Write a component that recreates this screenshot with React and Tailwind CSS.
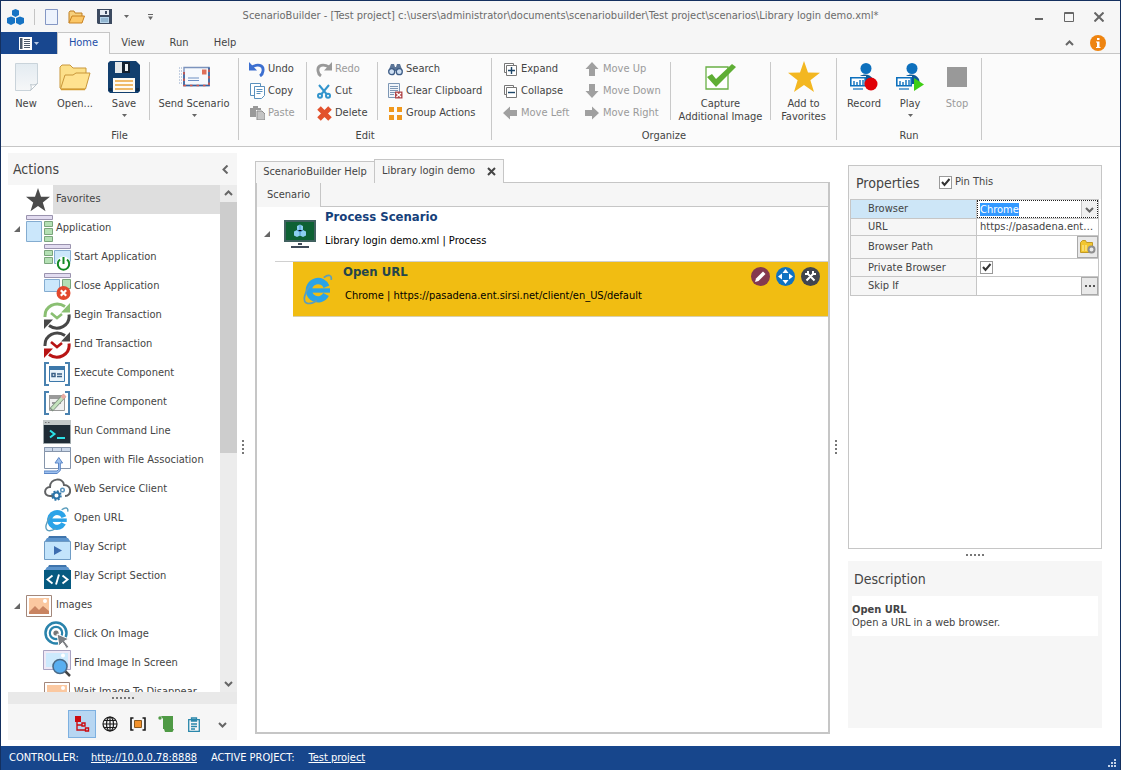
import React, { useState } from "react";

/* ---------- shared icons ---------- */

const Caret = ({ className = "" }) => (
  <svg className={className} width="5" height="3" viewBox="0 0 5 3" fill="#666">
    <path d="M0 0h5L2.500 3z" />
  </svg>
);

const Chevron = ({ d = "M1 6l3.500-3.500L8 6" }) => (
  <svg width="9" height="9" viewBox="0 0 9 9" fill="none" stroke="#666" strokeWidth="2">
    <path d={d} />
  </svg>
);

const DOWN = "M1 3l3.500 3.500L8 3";
const LEFT = "M6.500 0.500L2.500 4.500l4 4";

const IeIcon = ({ size }) => (
  <svg width={size} height={size} viewBox="0 0 28 28" fill="none">
    <circle cx="14" cy="15" r="8" stroke="#2ba3e8" strokeWidth="5.500" strokeDasharray="43 8" transform="rotate(28 14 15)" />
    <path d="M8 15.300h16.500" stroke="#2ba3e8" strokeWidth="3.800" />
    <path d="M19 4c4-3 7.500-2.500 6.500 2M7 11C1.500 18 1 24.500 3.500 26S10 26 13 24" stroke="#5d9ebd" strokeWidth="1.500" />
  </svg>
);

const Star = ({ size, color }) => (
  <svg width={size} height={size} viewBox="0 0 32 32" fill={color}>
    <path d="M16 0l4 11.500 12 .2-9.600 7.500L26 31l-10-7-10 7 3.600-11.800L0 11.700l12-.2z" />
  </svg>
);

/* ---------- quick access + ribbon icons ---------- */

const LogoIcon = () => (
  <svg width="17" height="16" viewBox="0 0 17 16" fill="#1673c4">
    <path d="M8.500 0l3.500 1.500v4.500l-3.500 2-3.500-2V1.500zM4 7.500l4 1.500v5l-4 2-4-2V9zM13 7.500L17 9v5l-4 2-4-2V9z" />
  </svg>
);

const PageIcon = () => (
  <svg width="13" height="16" viewBox="0 0 13 16">
    <path d="M.5.5h12v15H.5z" fill="#edf3fd" stroke="#8497c4" />
  </svg>
);

const SmallFolder = () => (
  <svg width="17" height="14" viewBox="0 0 17 14">
    <path d="M1 13V2.500L2 1h4l1 2h7v3" fill="#f7cf7b" stroke="#bf7f22" />
    <path d="M1 13L4 6h12.500L14 13z" fill="#fbc767" stroke="#c98222" />
  </svg>
);

const SmallFloppy = () => (
  <svg width="15" height="15" viewBox="0 0 15 15">
    <path d="M0 0h15v15H1l-1-1z" fill="#3c4a60" />
    <path d="M3 1h9v5H3z" fill="#e8edf3" />
    <path d="M8 2h2v3H8z" fill="#3c4a60" />
    <path d="M3 8h9v6H3z" fill="#b7d4ea" />
    <path d="M4 10h7M4 12h7" stroke="#6f98b8" />
  </svg>
);

const NewIcon = () => (
  <svg width="23" height="30" viewBox="0 0 23 30">
    <defs>
      <linearGradient id="page" x1="0" y1="0" x2="0" y2="1">
        <stop offset="0" stopColor="#e3ebf1" />
        <stop offset="1" stopColor="#f6f7f8" />
      </linearGradient>
    </defs>
    <path d="M.5 1.500h22v20l-7 7H.5z" fill="url(#page)" stroke="#c9d3da" />
    <path d="M15.500 28.500c1-2 1-4 0-6 2 .8 5 .5 7-1z" fill="#fff" stroke="#bcc6cd" />
  </svg>
);

const OpenIcon = () => (
  <svg width="32" height="27" viewBox="0 0 32 27">
    <path d="M1 24V3l2-2h8l3 3h13v5" fill="#fce08a" stroke="#c9973a" />
    <path d="M1.500 25L6 11h8l3-2h14l-4.500 16z" fill="#ffe28f" stroke="#c9973a" />
    <path d="M2 25.500h24" stroke="#d59c30" strokeWidth="1.500" />
  </svg>
);

const SaveIcon = () => (
  <svg width="32" height="32" viewBox="0 0 32 32">
    <path d="M2 0h26l4 4v26l-2 2H2l-2-2V2z" fill="#123f6e" />
    <path d="M7 1h15v11H7z" fill="#e4e8ea" />
    <path d="M14 1h8v11h-8z" fill="#14202e" />
    <path d="M17 3h3v7h-3z" fill="#eef1f3" />
    <path d="M5 17h22v14H5z" fill="#fdfaf3" />
    <path d="M7 20h18M7 24h18M7 28h18" stroke="#eaa53c" strokeWidth="1.600" />
    <path d="M1 27h3v3H1zM28 27h3v3h-3z" fill="#0b2a4b" />
  </svg>
);

const SendIcon = () => (
  <svg width="31" height="22" viewBox="0 0 31 22" fill="none">
    <path d="M0 2h4M0 5h4M0 8h4M0 11h4M0 14h4M0 17h4" stroke="#8aa3c8" strokeDasharray="1 1" />
    <path d="M5 1.500h25v18H5z" fill="#f6f9fd" stroke="#7c93bd" strokeWidth="1.400" />
    <path d="M5 6v13.500h25V1.500" stroke="#35629f" strokeWidth="1.600" />
    <path d="M5 6v13.500h25V1.500" stroke="#d8574a" strokeWidth="1.600" strokeDasharray="2.500 4" />
    <path d="M23 3.500h4.500v5H23z" fill="#e0705a" />
    <path d="M9 12h11M9 14.500h11" stroke="#6c8fc4" strokeWidth="1.200" />
  </svg>
);

const FileMenuIcon = () => (
  <svg width="13" height="13" viewBox="0 0 13 13">
    <path d="M0 0h13v13H0z" fill="#fff" />
    <path d="M1 1h2.500v11H1z" fill="#4d5a6b" />
    <path d="M5 2.500h6M5 4.500h6M5 6.500h6M5 8.500h6M5 10.500h6" stroke="#4d5a6b" />
  </svg>
);

const Undo = ({ color, flip }) => (
  <svg width="16" height="15" viewBox="0 0 16 15" fill="none">
    <g transform={flip ? "translate(16 0) scale(-1 1)" : ""}>
      <path d="M3 5c5-3 12-2.500 11 4-.2 2-1.500 4-3 5" stroke={color} strokeWidth="2.800" />
      <path d="M0 0v8.500h8z" fill={color} />
    </g>
  </svg>
);

const CopyIcon = () => (
  <svg width="15" height="16" viewBox="0 0 15 16" fill="#fff" stroke="#5a90bd">
    <path d="M.5.5h10v12H.5z" />
    <path d="M4.500 3.500h10v9l-3 3h-7z" />
    <path d="M6.500 6.500h6M6.500 8.500h6M6.500 10.500h4" />
  </svg>
);

const PasteIcon = () => (
  <svg width="15" height="14" viewBox="0 0 15 14" fill="#999">
    <path d="M0 2h3V0h5v2h3v2H6v7H0z" />
    <path d="M7 5h5l3 3v6H7z" fill="#c4c4c4" stroke="#8d8d8d" />
  </svg>
);

const CutIcon = () => (
  <svg width="14" height="15" viewBox="0 0 14 15" fill="none" stroke="#3194cc" strokeWidth="2">
    <path d="M2 1l7.500 9M12 1L4.500 10" />
    <circle cx="3" cy="11.800" r="2" />
    <circle cx="11" cy="11.800" r="2" />
  </svg>
);

const DeleteIcon = () => (
  <svg width="15" height="15" viewBox="0 0 15 15" stroke="#e2522d" strokeWidth="5">
    <path d="M2 2l11 11M13 2L2 13" />
  </svg>
);

const SearchIcon = () => (
  <svg width="15" height="13" viewBox="0 0 15 13">
    <path d="M3 1h3l1 3h1l1-3h3l2.500 7H.5z" fill="#5b7597" />
    <circle cx="3.700" cy="8.700" r="3" fill="#cfe0f3" stroke="#3f5d86" strokeWidth="1.300" />
    <circle cx="11.300" cy="8.700" r="3" fill="#cfe0f3" stroke="#3f5d86" strokeWidth="1.300" />
  </svg>
);

const ClearIcon = () => (
  <svg width="15" height="16" viewBox="0 0 15 16">
    <path d="M.5.500h11v14H.5z" fill="#f1f5fa" stroke="#7d97b5" />
    <path d="M2 3.500h8M2 5.500h8M2 7.500h8M2 9.500h6M2 11.500h4" stroke="#7d97b5" />
    <path d="M7 8.500h7.500v7H7z" fill="#b0474a" />
    <path d="M8.500 10l4.500 4m0-4l-4.500 4" stroke="#fff" strokeWidth="1.300" />
  </svg>
);

const GroupIcon = () => (
  <svg width="13" height="13" viewBox="0 0 13 13" fill="#f0981c">
    <path d="M0 0h5v5H0zM8 0h5v5H8zM0 8h5v5H0zM8 8h5v5H8z" />
  </svg>
);

const BoxIcon = ({ plus }) => (
  <svg width="13" height="13" viewBox="0 0 13 13" fill="#fff" stroke="#777">
    <path d="M.5 .5h9v9h-9z" />
    <path d="M2.500 2.500h10v10h-10z" />
    <path d={plus ? "M4 7.500h7M7.500 4v7" : "M4 7.500h7"} stroke="#1d4668" strokeWidth="1.400" />
  </svg>
);

const Arrow = ({ turn }) => (
  <svg width="14" height="14" viewBox="0 0 14 14" fill="#a0a0a0">
    <path d="M7 0l6.500 7H10v7H4V7H.5z" transform={`rotate(${turn} 7 7)`} />
  </svg>
);

const CaptureIcon = () => (
  <svg width="32" height="28" viewBox="0 0 32 28">
    <path d="M1 4h22v22H1z" fill="#fff" stroke="#69b045" strokeWidth="1.300" />
    <path d="M2 14l5-3 4 5L27 1l4 3-20 20z" fill="#5fae35" />
  </svg>
);

const PersonIcon = ({ badge }) => (
  <svg width="28" height="28" viewBox="0 0 28 28">
    <circle cx="16" cy="5.500" r="5.500" fill="#0d70bd" />
    <path d="M10 13c4-2.500 10-2 13 3l1 5h-8v-8z" fill="#0d5896" />
    <path d="M.8 14.800h14.400v8H.8z" fill="#fff" stroke="#0d70bd" strokeWidth="1.600" />
    <path d="M4 22v-4M7 22v-3M10 22v-5M13 22v-5" stroke="#0d70bd" strokeWidth="1.400" />
    <path d="M3 26h10" stroke="#0d70bd" strokeWidth="1.200" />
    {badge === "record" ? (
      <circle cx="21" cy="21" r="6.500" fill="#e00007" />
    ) : (
      <path d="M18 15l10 6.500L18 28z" fill="#3fce14" />
    )}
  </svg>
);

/* ---------- tree icons ---------- */

const AppIcon = () => (
  <svg width="27" height="27" viewBox="0 0 27 27">
    <path d="M.5.5h26v4H.5z" fill="#e2dcf0" stroke="#9a93ae" />
    <path d="M.5 6.500h15v20H.5z" fill="#cbe7fb" stroke="#84acd0" />
    <path d="M18.500 6.500h8v5h-8zM18.500 13.500h8v6h-8zM18.500 21.500h8v5h-8z" fill="#b4e0b4" stroke="#7aa57c" />
  </svg>
);

const StartIcon = () => (
  <svg width="27" height="27" viewBox="0 0 27 27" fill="none">
    <path d="M.5.5h26v4H.5z" fill="#e2dcf0" stroke="#9a93ae" />
    <path d="M.5 6.500h8v5h-8zM.5 13.500h8v6h-8z" fill="#b4e0b4" stroke="#7aa57c" />
    <path d="M10.500 6.500h16v13h-16z" fill="#cbe7fb" stroke="#84acd0" />
    <circle cx="19.500" cy="20" r="7.500" fill="#fff" />
    <path d="M16 15.500a5.700 5.700 0 1 0 7 0M19.500 13v7" stroke="#138a25" strokeWidth="2" />
  </svg>
);

const CloseAppIcon = () => (
  <svg width="27" height="27" viewBox="0 0 27 27">
    <path d="M.5.5h26v4H.5z" fill="#e2dcf0" stroke="#9a93ae" />
    <path d="M.5 6.500h15v12H.5z" fill="#cbe7fb" stroke="#84acd0" />
    <path d="M18.500 6.500h8v9h-8z" fill="#b4e0b4" stroke="#7aa57c" />
    <circle cx="19.500" cy="20" r="7" fill="#e2482d" />
    <path d="M16.800 17.300l5.400 5.400m0-5.400l-5.400 5.400" stroke="#fff" strokeWidth="2.200" />
  </svg>
);

const CycleIcon = ({ top, bottom, hand }) => (
  <svg width="28" height="28" viewBox="0 0 28 28" fill="none" strokeWidth="3">
    <path d="M2 15C1.500 4 13-1.500 22 4.500" stroke={top} />
    <path d="M27 1v9.500H18z" fill={top} />
    <path d="M26 12.500C27.500 23.500 15 30 6 23.500" stroke={bottom} />
    <path d="M1 27v-9.500H10z" fill={bottom} />
    <path d="M8 11l6 5 5-4" stroke={hand} strokeWidth="2.600" />
  </svg>
);

const Brackets = ({ children }) => (
  <svg width="26" height="24" viewBox="0 0 26 24" fill="none">
    <path d="M5 1H1v22h4M21 1h4v22h-4" stroke="#4a82b0" strokeWidth="2" />
    {children}
  </svg>
);

const ExecuteIcon = () => (
  <Brackets>
    <path d="M5.500 4.500h15v15h-15z" fill="#eaf3fa" stroke="#3d78aa" />
    <path d="M5 4h16v4H5z" fill="#3d78aa" />
    <path d="M8 11.500h3v3H8zM13 12h5M13 14.500h5" stroke="#3a5f85" strokeWidth="1.500" />
  </Brackets>
);

const DefineIcon = () => (
  <Brackets>
    <path d="M5.500 4.500h15v15h-15z" fill="#f0f0f0" stroke="#9a9a9a" />
    <path d="M5 4h16v4H5zM8 11h9v2H8z" fill="#9a9a9a" />
    <path d="M7 19L20 5" stroke="#7e8f80" strokeWidth="4.600" />
    <path d="M8 18L20 5" stroke="#c4e2bd" strokeWidth="3" />
    <path d="M18 7l3-3" stroke="#e6a9a0" strokeWidth="4" />
  </Brackets>
);

const ConsoleIcon = () => (
  <svg width="28" height="24" viewBox="0 0 28 24" fill="none">
    <path d="M.5.5h27v23H.5z" fill="#1f2c36" stroke="#9fa8ab" />
    <path d="M0 0h28v5H0z" fill="#c3c9c9" />
    <path d="M2 2.500h5" stroke="#777" strokeDasharray="1.500 1.500" />
    <path d="M7 10.500l4.500 3.500L7 17.500M14 18h8" stroke="#2ce0e6" strokeWidth="2" />
  </svg>
);

const AssocIcon = () => (
  <svg width="27" height="27" viewBox="0 0 27 27">
    <path d="M.5.5h26v21H.5z" fill="#fff" stroke="#8695ab" />
    <path d="M.5.5h26v4H.5z" fill="#ccd9ea" stroke="#8695ab" />
    <path d="M8.500 1v3M17.500 1v3" stroke="#8695ab" />
    <path d="M0 24h13l1.500-1.500V16H11l3.800-5.500 3.800 5.500h-2.300v7.500L13 26.500H0z" fill="#9dc0ef" stroke="#5b86c6" />
  </svg>
);

const CloudIcon = () => (
  <svg width="27" height="23" viewBox="0 0 27 23" fill="none">
    <path d="M9 18H6C-1 18 0 9 6 9c0-9 13-10 14-2 8 0 8 11 1 11" stroke="#606264" strokeWidth="2" />
    <circle cx="12.500" cy="17.500" r="3" stroke="#2c74a8" strokeWidth="2" />
    <circle cx="12.500" cy="17.500" r="4.500" stroke="#2c74a8" strokeWidth="1.500" strokeDasharray="2 1.500" />
    <circle cx="18.500" cy="12" r="1.800" stroke="#5a93bd" strokeWidth="1.500" />
  </svg>
);

const ScriptIcon = () => (
  <svg width="27" height="24" viewBox="0 0 27 24">
    <path d="M5 0h17l2 4H3z" fill="#3f74ac" />
    <path d="M3 2h21l2 3H1z" fill="#5c94cc" />
    <path d="M.5 5.500h26v18H.5z" fill="#c3e4fb" stroke="#6f9cc5" />
    <path d="M10 10l8 4.500-8 4.500z" fill="#3d6db0" />
  </svg>
);

const ScriptSectionIcon = () => (
  <svg width="27" height="24" viewBox="0 0 27 24" fill="none">
    <path d="M5 0h17l2 4H3z" fill="#3f74ac" />
    <path d="M3 2h21l2 3H1z" fill="#5c94cc" />
    <path d="M0 5h27v19H0z" fill="#065a80" />
    <path d="M8.500 10.500L3.500 14.500l5 4M18.500 10.500l5 4-5 4M15 9.500l-3 10" stroke="#fff" strokeWidth="1.900" />
  </svg>
);

const ImageIcon = () => (
  <svg width="26" height="22" viewBox="0 0 26 22">
    <path d="M.5.5h25v21H.5z" fill="#fff" stroke="#a3877a" />
    <path d="M3 3h20v16H3z" fill="#fbc8a0" />
    <path d="M3 17l6-6 4 4 4-4 6 5v3H3z" fill="#c98461" />
    <circle cx="19" cy="6" r="2" fill="#fff" />
  </svg>
);

const TargetIcon = () => (
  <svg width="26" height="28" viewBox="0 0 26 28" fill="none">
    <circle cx="12" cy="12" r="10.500" stroke="#2a83ab" strokeWidth="2.500" />
    <circle cx="12" cy="12" r="6.200" stroke="#2a83ab" strokeWidth="2.200" />
    <circle cx="12" cy="12" r="2.600" fill="#777" />
    <path d="M13 13l12 5-4.500 2 4.500 6-2.500 1.500-4-6-3.500 3.500z" fill="#7c7f83" stroke="#fff" />
  </svg>
);

const FindIcon = () => (
  <svg width="28" height="27" viewBox="0 0 28 27">
    <path d="M.5.5h27v19H.5z" fill="#eee9f6" stroke="#a9a3c2" />
    <path d="M3 3h22v14H3z" fill="#cdeafd" />
    <circle cx="20" cy="5.500" r="2" fill="#fff" />
    <path d="M22 21l5 5" stroke="#444" strokeWidth="2.500" />
    <circle cx="17" cy="16.500" r="7" fill="#58aef0" stroke="#4a6a88" strokeWidth="1.600" />
  </svg>
);

/* ---------- data ---------- */

const applicationItems = [
  { label: "Start Application", icon: <StartIcon /> },
  { label: "Close Application", icon: <CloseAppIcon /> },
  { label: "Begin Transaction", icon: <CycleIcon top="#8abf72" bottom="#474747" hand="#8abf72" /> },
  { label: "End Transaction", icon: <CycleIcon top="#474747" bottom="#b81414" hand="#b81414" /> },
  { label: "Execute Component", icon: <ExecuteIcon /> },
  { label: "Define Component", icon: <DefineIcon /> },
  { label: "Run Command Line", icon: <ConsoleIcon /> },
  { label: "Open with File Association", icon: <AssocIcon /> },
  { label: "Web Service Client", icon: <CloudIcon /> },
  { label: "Open URL", icon: <IeIcon size={26} /> },
  { label: "Play Script", icon: <ScriptIcon /> },
  { label: "Play Script Section", icon: <ScriptSectionIcon /> },
];

const imageItems = [
  { label: "Click On Image", icon: <TargetIcon /> },
  { label: "Find Image In Screen", icon: <FindIcon /> },
  { label: "Wait Image To Disappear", icon: <ImageIcon /> },
];

/* ---------- ribbon ---------- */

function RibbonGroup({ label, children }) {
  return (
    <section className="mt-1 mb-[6px] flex h-[82px] flex-col border-r border-[#c9c9c9]">
      <div className="flex h-[62px] shrink-0 items-start">{children}</div>
      <h2 className="pt-2 text-center leading-4">{label}</h2>
    </section>
  );
}

const Divider = () => <div className="mt-1 h-[58px] w-px bg-[#c9c9c9]" />;

function BigButton({ icon, label, width, caret, disabled }) {
  return (
    <button className={`flex flex-col items-center pt-[3px] ${width} ${disabled ? "text-[#9a9a9a]" : ""}`}>
      <span className="flex h-8 items-center">{icon}</span>
      <span className="pt-1 leading-[13px] whitespace-pre-line">{label}</span>
      {caret && <Caret className="mt-1" />}
    </button>
  );
}

function SmallButtons({ items, className }) {
  return (
    <div className={`flex flex-col ${className}`}>
      {items.map((item) => (
        <button
          key={item.label}
          className={`flex h-[22px] items-center gap-[3px] whitespace-nowrap ${item.disabled ? "text-[#9a9a9a]" : ""}`}
        >
          <span className="flex w-4 justify-center">{item.icon}</span>
          {item.label}
        </button>
      ))}
    </div>
  );
}

function Ribbon() {
  return (
    <div className="flex shrink-0 border-b border-[#c6c6c6] bg-[#fbfbfb]">
      <RibbonGroup label="File">
        <BigButton icon={<NewIcon />} label="New" width="w-[50px]" />
        <BigButton icon={<OpenIcon />} label="Open..." width="w-12" />
        <BigButton icon={<SaveIcon />} label="Save" width="w-[50px]" caret />
        <Divider />
        <BigButton icon={<SendIcon />} label="Send Scenario" width="w-[88px]" caret />
      </RibbonGroup>
      <RibbonGroup label="Edit">
        <SmallButtons
          className="w-[67px] pl-[10px]"
          items={[
            { label: "Undo", icon: <Undo color="#3c6fd0" /> },
            { label: "Copy", icon: <CopyIcon /> },
            { label: "Paste", icon: <PasteIcon />, disabled: true },
          ]}
        />
        <Divider />
        <SmallButtons
          className="w-[70px] pl-[9px]"
          items={[
            { label: "Redo", icon: <Undo color="#999" flip />, disabled: true },
            { label: "Cut", icon: <CutIcon /> },
            { label: "Delete", icon: <DeleteIcon /> },
          ]}
        />
        <Divider />
        <SmallButtons
          className="w-[113px] pl-[9px]"
          items={[
            { label: "Search", icon: <SearchIcon /> },
            { label: "Clear Clipboard", icon: <ClearIcon /> },
            { label: "Group Actions", icon: <GroupIcon /> },
          ]}
        />
      </RibbonGroup>
      <RibbonGroup label="Organize">
        <SmallButtons
          className="w-[82px] pl-[10px]"
          items={[
            { label: "Expand", icon: <BoxIcon plus /> },
            { label: "Collapse", icon: <BoxIcon /> },
            { label: "Move Left", icon: <Arrow turn={-90} />, disabled: true },
          ]}
        />
        <SmallButtons
          className="w-24 pl-[10px]"
          items={[
            { label: "Move Up", icon: <Arrow turn={0} />, disabled: true },
            { label: "Move Down", icon: <Arrow turn={180} />, disabled: true },
            { label: "Move Right", icon: <Arrow turn={90} />, disabled: true },
          ]}
        />
        <Divider />
        <BigButton icon={<CaptureIcon />} label={"Capture\nAdditional Image"} width="w-[99px]" />
        <Divider />
        <BigButton icon={<Star size={32} color="#f3b721" />} label={"Add to\nFavorites"} width="w-[65px]" />
      </RibbonGroup>
      <RibbonGroup label="Run">
        <div className="w-1" />
        <BigButton icon={<PersonIcon badge="record" />} label="Record" width="w-[46px]" />
        <BigButton icon={<PersonIcon badge="play" />} label="Play" width="w-[46px]" caret />
        <BigButton
          icon={<span className="h-5 w-5 bg-[#999]" />}
          label="Stop"
          width="w-[48px]"
          disabled
        />
      </RibbonGroup>
    </div>
  );
}

/* ---------- title bar and tabs ---------- */

function TitleBar() {
  return (
    <header className="relative flex h-[31px] shrink-0 items-center justify-between bg-[#f6f6f6] pr-4 pl-[6px]">
      <div className="flex items-center">
        <LogoIcon />
        <span className="mx-[10px] h-4 w-px bg-[#c4c4c4]" />
        <button aria-label="New file" className="mr-[10px]"><PageIcon /></button>
        <button aria-label="Open file" className="mr-3"><SmallFolder /></button>
        <button aria-label="Save file" className="mr-3"><SmallFloppy /></button>
        <button aria-label="Save options"><Caret /></button>
        <button aria-label="Customize toolbar" className="ml-[19px]">
          <svg width="5" height="6" viewBox="0 0 5 6" fill="#666">
            <path d="M0 0h5v1H0zM0 2.500h5L2.500 6z" />
          </svg>
        </button>
      </div>
      <h1 className="absolute inset-x-0 top-[7px] text-center whitespace-nowrap text-[#6b6b6b]">
        ScenarioBuilder - [Test project] c:\users\administrator\documents\scenariobuilder\Test
        project\scenarios\Library login demo.xml*
      </h1>
      <div className="relative flex items-center gap-5">
        <button aria-label="Minimize">
          <svg width="9" height="10" viewBox="0 0 9 10"><path d="M0 6h8v2H0z" fill="#666" /></svg>
        </button>
        <button aria-label="Maximize">
          <svg width="10" height="10" viewBox="0 0 10 10" fill="none" stroke="#666">
            <path d="M.5.5h9v9h-9zM0 1.500h10" />
          </svg>
        </button>
        <button aria-label="Close">
          <svg width="10" height="10" viewBox="0 0 10 10" stroke="#666" strokeWidth="2">
            <path d="M.5.5l9 9M9.500.500l-9 9" />
          </svg>
        </button>
      </div>
    </header>
  );
}

function RibbonTabs() {
  const [tab, setTab] = useState("Home");
  return (
    <nav className="flex h-[22px] shrink-0 bg-[#f6f6f6] shadow-[inset_0_-1px_0_#c6c6c6]">
      <button
        aria-label="File menu"
        className="flex w-14 items-center justify-center gap-[2px] bg-[#18478f]"
      >
        <FileMenuIcon />
        <svg width="5" height="3" viewBox="0 0 5 3" fill="#b8c9e4"><path d="M0 0h5L2.500 3z" /></svg>
      </button>
      {["Home", "View", "Run", "Help"].map((name) => (
        <button
          key={name}
          onClick={() => setTab(name)}
          className={
            tab === name
              ? "w-[53px] border-x border-t border-[#c6c6c6] bg-[#fbfbfb] text-[#1d4ea8]"
              : "w-[46px]"
          }
        >
          {name}
        </button>
      ))}
      <div className="ml-auto flex items-center gap-4 pr-[14px]">
        <button aria-label="Collapse ribbon"><Chevron /></button>
        <button aria-label="Information">
          <svg width="16" height="16" viewBox="0 0 16 16">
            <circle cx="8" cy="8" r="8" fill="#ee8410" />
            <path d="M7 3h2.500v2H7zM6 6.500h3.500v5.500h1v1H6v-1h1V7.500H6z" fill="#fff" />
          </svg>
        </button>
      </div>
    </nav>
  );
}

/* ---------- actions panel ---------- */

const Expander = () => (
  <svg width="6" height="6" viewBox="0 0 6 6" fill="#666"><path d="M6 0v6H0z" /></svg>
);

function TreeRow({ icon, label }) {
  return (
    <li className="flex h-[29px] items-center pl-[34px]">
      <span className="flex w-[30px] justify-center">{icon}</span>
      <span className="pl-[2px] whitespace-nowrap">{label}</span>
    </li>
  );
}

function TreeFolder({ icon, label, items }) {
  return (
    <li>
      <div className="flex h-[29px] items-center pl-[6px]">
        <Expander />
        <span className="ml-1 flex w-[30px] justify-center">{icon}</span>
        <span className="pl-[2px]">{label}</span>
      </div>
      <ul>
        {items.map((item) => (
          <TreeRow key={item.label} {...item} />
        ))}
      </ul>
    </li>
  );
}

function ActionsPanel() {
  return (
    <aside className="flex w-[229px] shrink-0 flex-col">
      <div className="flex h-8 shrink-0 items-center justify-between bg-[#f6f6f6] pr-[7px] pl-[5px]">
        <h2 className="text-sm">Actions</h2>
        <button aria-label="Hide actions"><Chevron d={LEFT} /></button>
      </div>
      <div className="flex min-h-0 flex-1">
        <ul className="min-w-0 flex-1 overflow-hidden">
          <li className="flex h-[29px] items-center pl-[15px]">
            <span className="flex w-[30px] justify-center"><Star size={24} color="#4b4b4b" /></span>
            <span className="flex h-full flex-1 items-center bg-[#dedede] pl-[3px]">Favorites</span>
          </li>
          <TreeFolder icon={<AppIcon />} label="Application" items={applicationItems} />
          <TreeFolder icon={<ImageIcon />} label="Images" items={imageItems} />
        </ul>
        <div className="flex w-[17px] flex-col bg-[#ececec]">
          <button aria-label="Scroll up" className="flex h-[17px] items-center justify-center">
            <Chevron />
          </button>
          <div className="flex-1">
            <div className="h-[53%] bg-[#cdcdcd]" />
          </div>
          <button aria-label="Scroll down" className="flex h-[17px] items-center justify-center">
            <Chevron d={DOWN} />
          </button>
        </div>
      </div>
      <div className="flex h-3 shrink-0 items-center justify-center bg-[#e9e9e9]">
        <span className="w-[22px] border-t-2 border-dotted border-[#777]" />
      </div>
      <div className="flex h-9 shrink-0 items-center bg-[#f6f6f6] pt-1 pl-[60px]">
        <button aria-label="Tree view" className="flex h-7 w-7 items-center justify-center border border-[#7db0e0] bg-[#b7d6f2]">
          <svg width="16" height="16" viewBox="0 0 16 16" fill="none" stroke="#cc0a10" strokeWidth="1.400">
            <path d="M1 0h6v6H1z" fill="#cc0a10" stroke="none" />
            <path d="M3 5v9h8M3 9h5M8 7h3v3H8zM11.500 12h3v3h-3z" />
          </svg>
        </button>
        <button aria-label="Web" className="flex w-7 justify-center">
          <svg width="16" height="16" viewBox="0 0 16 16" fill="none" stroke="#1a1a1a" strokeWidth="1.200">
            <circle cx="8" cy="8" r="7" />
            <path d="M8 1v14M1 8h14M2 4.500h12M2 11.500h12" />
            <ellipse cx="8" cy="8" rx="3.500" ry="7" />
          </svg>
        </button>
        <button aria-label="Components" className="flex w-7 justify-center">
          <svg width="16" height="14" viewBox="0 0 16 14" fill="none" stroke="#1a1a1a" strokeWidth="1.600">
            <path d="M3.500 1H1v12h2.500M12.500 1H15v12h-2.500" />
            <path d="M4.500 3.500h7v7h-7z" fill="#f3922b" stroke="#8a5a20" strokeWidth="1" />
          </svg>
        </button>
        <button aria-label="Scripts" className="flex w-7 justify-center">
          <svg width="16" height="16" viewBox="0 0 16 16" fill="#4f9a45">
            <path d="M3 0h12v13H5V3zM6 13h10l-1.500 3H7z" />
            <circle cx="2" cy="2" r="1.700" />
          </svg>
        </button>
        <button aria-label="Clipboard" className="flex w-7 justify-center">
          <svg width="12" height="15" viewBox="0 0 12 15" fill="none" stroke="#2a87ab" strokeWidth="1.300">
            <path d="M.7 2.700h10.600v11.600H.7zM3.500 1h5v3h-5zM3 7h6M3 9.500h6M3 12h4" />
          </svg>
        </button>
        <button aria-label="More" className="flex w-7 justify-center"><Chevron d={DOWN} /></button>
      </div>
    </aside>
  );
}

/* ---------- editor ---------- */

function Editor() {
  return (
    <main className="flex min-w-0 flex-1 flex-col pt-[6px]">
      <div className="z-10 -mb-px flex items-end">
        <button className="h-[22px] w-[120px] border-x border-t border-[#c6c6c6] bg-[#f6f6f6]">
          ScenarioBuilder Help
        </button>
        <button className="-ml-px flex h-6 w-[130px] items-center justify-center gap-3 border-x border-t border-[#c6c6c6] bg-[#f6f6f6]">
          Library login demo
          <svg width="9" height="9" viewBox="0 0 9 9" stroke="#444" strokeWidth="2">
            <path d="M1 1l7 7M8 1L1 8" />
          </svg>
        </button>
      </div>
      <div className="flex flex-1 flex-col border-2 border-t border-[#c6c6c6] bg-white">
        <div className="flex h-6 bg-[#f6f6f6] shadow-[inset_0_-1px_0_#c6c6c6]">
          <button className="w-16 border-r border-[#c6c6c6] bg-[#f6f6f6]">Scenario</button>
        </div>
        <div className="flex h-[54px] items-center pl-[7px]">
          <Expander />
          <svg className="ml-[14px]" width="32" height="29" viewBox="0 0 32 29">
            <path d="M1 1h30v20H1z" fill="#0d6133" stroke="#40615f" strokeWidth="2" />
            <path d="M16 4.500l3 1.500v4l3 1.500v4l-3 1.500-3-1.500-3 1.500-3-1.500v-4l3-1.500V6z" fill="#8ccff0" />
            <path d="M16 5v5M13 10l3 2 3-2M16 12v3" stroke="#4896cc" />
            <path d="M14 23h4v2h-4zM7 26h18v2H7z" fill="#404a58" />
          </svg>
          <div className="self-start pt-[2px] pl-[9px] text-black">
            <div className="text-[13px] leading-4 font-bold text-[#15407a]">Process Scenario</div>
            <div className="pt-2 leading-4">Library login demo.xml | Process</div>
          </div>
        </div>
        <div className="ml-[18px] border-t border-[#d0d0d0]" />
        <div className="ml-9 flex h-[55px] border-b border-[#d8cfae] bg-[#f1bd12] pr-2 pl-[9px]">
          <div className="flex items-center"><IeIcon size={32} /></div>
          <div className="min-w-0 flex-1 pt-[2px] pl-[9px] text-black">
            <div className="text-[13px] leading-4 font-bold text-[#24454c]">Open URL</div>
            <div className="truncate pt-2 pl-[2px] leading-4">
              Chrome | https://pasadena.ent.sirsi.net/client/en_US/default
            </div>
          </div>
          <div className="flex gap-[6px] pt-[5px]">
            <button aria-label="Edit" className="flex h-[19px] w-[19px] items-center justify-center rounded-full bg-[#84394f]">
              <svg width="11" height="11" viewBox="0 0 11 11">
                <path d="M0 11l1-3.500L8 .500 10.500 3 3.500 10z" fill="#fff" />
              </svg>
            </button>
            <button aria-label="Move" className="flex h-[19px] w-[19px] items-center justify-center rounded-full bg-[#0f72c2]">
              <svg width="17" height="17" viewBox="0 0 17 17" fill="#fff">
                <path d="M8.500 1l3 4h-6zM8.500 16l3-4h-6zM1 8.500l4-3v6zM16 8.500l-4-3v6z" />
              </svg>
            </button>
            <button aria-label="Tools" className="flex h-[19px] w-[19px] items-center justify-center rounded-full bg-[#41454f]">
              <svg width="11" height="11" viewBox="0 0 11 11" fill="none" stroke="#fff" strokeWidth="2">
                <path d="M2 2l7.500 7.500M9 2L1.500 9.500M0 3h3V0M8 0v3h3" />
              </svg>
            </button>
          </div>
        </div>
      </div>
    </main>
  );
}

/* ---------- properties ---------- */

function Check({ id, checked, onChange }) {
  return (
    <span className="relative flex h-[13px] w-[13px]">
      <input
        id={id}
        type="checkbox"
        checked={checked}
        onChange={onChange}
        className="h-[13px] w-[13px] appearance-none border border-[#9a9a9a] bg-white"
      />
      {checked && (
        <svg className="pointer-events-none absolute inset-0" width="13" height="13" viewBox="0 0 13 13" fill="none" stroke="#333" strokeWidth="2">
          <path d="M3 6l2.500 3L10.500 3" />
        </svg>
      )}
    </span>
  );
}

function PropertyRow({ id, label, height, active, children }) {
  return (
    <tr className={height}>
      <th scope="row" className={`w-[126px] border border-[#c6c6c6] p-0 pl-[17px] text-left leading-4 font-normal ${active ? "bg-[#cde6f7]" : "bg-[#f6f6f6]"}`}>
        <label htmlFor={id}>{label}</label>
      </th>
      <td className="border border-[#c6c6c6] p-0">{children}</td>
    </tr>
  );
}

function Properties() {
  const [pinned, setPinned] = useState(true);
  const [isPrivate, setIsPrivate] = useState(true);
  return (
    <section className="flex min-h-0 flex-1 flex-col border border-[#c6c6c6]">
      <div className="flex h-[33px] items-center bg-[#f6f6f6] pl-[7px]">
        <h2 className="w-[83px] text-sm">Properties</h2>
        <Check id="pin" checked={pinned} onChange={() => setPinned(!pinned)} />
        <label htmlFor="pin" className="pl-[3px]">Pin This</label>
      </div>
      <div className="pr-[2px] pl-px">
        <table className="w-full table-fixed border-collapse">
          <tbody>
            <PropertyRow id="browser" label="Browser" height="h-[19px]" active>
              <div className="flex h-[18px] items-center border border-dotted border-[#222] pl-[2px]">
                <select id="browser" className="h-[13px] w-[39px] appearance-none bg-[#3399ff] leading-[13px] text-white">
                  <option>Chrome</option>
                </select>
                <span className="ml-auto flex h-4 w-4 items-center justify-center border-l border-[#c6c6c6] bg-[#f0f0f0]">
                  <Chevron d={DOWN} />
                </span>
              </div>
            </PropertyRow>
            <PropertyRow id="url" label="URL" height="h-[17px]">
              <input
                id="url"
                defaultValue="https://pasadena.ent.sirsi.net/client/en_US/default"
                className="block h-4 w-full truncate pr-1 pl-[3px]"
              />
            </PropertyRow>
            <PropertyRow id="path" label="Browser Path" height="h-[23px]">
              <div className="flex">
                <input id="path" className="w-full min-w-0 flex-1" />
                <button aria-label="Browse" className="flex h-[22px] w-[21px] items-center justify-center border border-[#a9a9a9] bg-[#e9e9e9]">
                  <svg width="16" height="14" viewBox="0 0 16 14">
                    <path d="M.5 12.500v-10l2-2h3l1 2h6v10z" fill="#f2c62f" stroke="#c29a25" />
                    <path d="M3 5v6M6 5v6" stroke="#fff2b0" />
                    <circle cx="11.500" cy="9.500" r="3" fill="#e9e9e9" stroke="#8f8f8f" strokeWidth="2" />
                  </svg>
                </button>
              </div>
            </PropertyRow>
            <PropertyRow id="private" label="Private Browser" height="h-[18px]">
              <div className="pl-[3px]">
                <Check id="private" checked={isPrivate} onChange={() => setIsPrivate(!isPrivate)} />
              </div>
            </PropertyRow>
            <PropertyRow id="skip" label="Skip If" height="h-[19px]">
              <div className="flex">
                <input id="skip" className="w-full min-w-0 flex-1" />
                <button aria-label="Edit condition" className="flex h-[18px] w-[17px] items-center justify-center border border-[#a9a9a9] bg-[#e9e9e9]">
                  <svg width="10" height="2" viewBox="0 0 10 2" fill="#555">
                    <path d="M0 0h2v2H0zM4 0h2v2H4zM8 0h2v2H8z" />
                  </svg>
                </button>
              </div>
            </PropertyRow>
          </tbody>
        </table>
      </div>
    </section>
  );
}

function Description() {
  return (
    <section className="h-[167px] shrink-0 bg-[#f6f6f6] px-1">
      <h2 className="flex h-[35px] items-center pl-[2px] text-sm">Description</h2>
      <div className="h-10 bg-white pt-[7px] leading-[13px]">
        <div className="font-bold">Open URL</div>
        <p>Open a URL in a web browser.</p>
      </div>
    </section>
  );
}

const VerticalGrip = () => (
  <div className="flex w-[18px] shrink-0 items-center pl-[5px]">
    <span className="h-[14px] border-l-2 border-dotted border-[#777]" />
  </div>
);

function StatusBar() {
  return (
    <footer className="flex h-6 shrink-0 items-center bg-[#17468c] pl-2 text-white">
      <span>CONTROLLER:</span>
      <a href="#controller" className="ml-3 underline">http://10.0.0.78:8888</a>
      <span className="ml-[14px]">ACTIVE PROJECT:</span>
      <a href="#project" className="ml-[14px] underline">Test project</a>
      <svg className="mt-auto mr-1 mb-[3px] ml-auto" width="8" height="8" viewBox="0 0 8 8" fill="#c3d2e8">
        <path d="M6 0h2v2H6zM3 3h2v2H3zM6 3h2v2H6zM0 6h2v2H0zM3 6h2v2H3zM6 6h2v2H6z" />
      </svg>
    </footer>
  );
}

export default function App() {
  return (
    <div className="flex h-screen flex-col overflow-hidden border-x border-t border-[#14305f] bg-white font-['DejaVu_Sans_Condensed','Liberation_Sans',sans-serif] text-[11px] text-[#444]">
      <TitleBar />
      <RibbonTabs />
      <Ribbon />
      <div className="flex min-h-0 flex-1 pt-[6px] pr-[18px] pb-[6px] pl-[7px]">
        <ActionsPanel />
        <VerticalGrip />
        <div className="flex min-w-0 flex-1 pb-[6px]">
          <Editor />
        </div>
        <VerticalGrip />
        <div className="flex w-[254px] shrink-0 flex-col pt-3 pb-3">
          <Properties />
          <div className="flex h-3 shrink-0 items-center justify-center">
            <span className="w-[18px] border-t-2 border-dotted border-[#777]" />
          </div>
          <Description />
        </div>
      </div>
      <StatusBar />
    </div>
  );
}
